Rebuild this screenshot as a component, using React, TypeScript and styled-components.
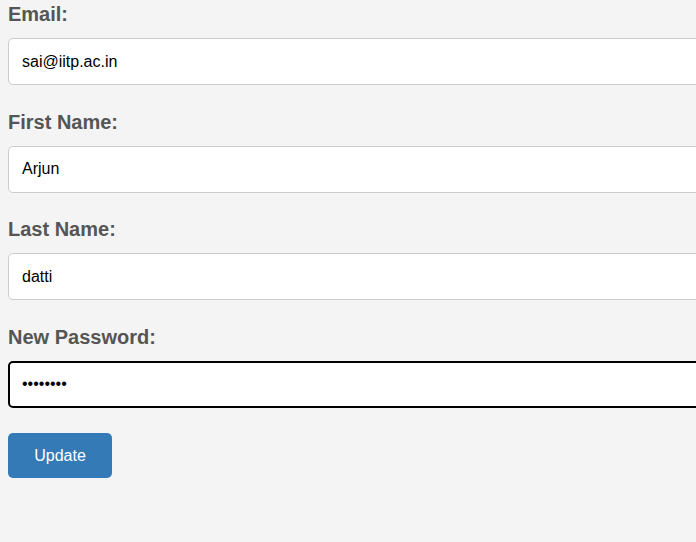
import React from "react";
import styled, { createGlobalStyle } from "styled-components";

const Global = createGlobalStyle`
  html, body { margin: 0; padding: 0; overflow: hidden; background: #f4f4f4; }
  body { font-family: "Liberation Sans", Arial, sans-serif; }
`;

const Form = styled.form`
  display: flex;
  flex-direction: column;
  padding: 2px 0 0 8px;
  width: 740px;
`;

const Field = styled.div`
  display: flex;
  flex-direction: column;
  margin-bottom: 24.67px;
`;

const Label = styled.label`
  font-size: 20px;
  font-weight: bold;
  line-height: 24px;
  color: #555555;
  margin-bottom: 12px;
`;

const Input = styled.input<{ $focused?: boolean }>`
  box-sizing: border-box;
  height: 47px;
  width: 100%;
  padding: 0 12px;
  font-family: "Liberation Sans", Arial, sans-serif;
  font-size: 16px;
  color: #000;
  background: #fff;
  border: ${(p) => (p.$focused ? "2px solid #000" : "1px solid #cccccc")};
  padding-left: ${(p) => (p.$focused ? "12px" : "13px")};
  border-radius: 5px;
  outline: none;
`;

const Button = styled.button`
  align-self: flex-start;
  box-sizing: border-box;
  width: 104px;
  height: 45px;
  margin-top: 0.5px;
  background: #337ab7;
  color: #fff;
  border: none;
  border-radius: 5px;
  font-family: "Liberation Sans", Arial, sans-serif;
  font-size: 16px;
  cursor: pointer;
`;

export default function App() {
  return (
    <>
      <Global />
      <Form onSubmit={(e) => e.preventDefault()}>
        <Field>
          <Label>Email:</Label>
          <Input type="email" defaultValue="sai@iitp.ac.in" />
        </Field>
        <Field>
          <Label>First Name:</Label>
          <Input type="text" defaultValue="Arjun" />
        </Field>
        <Field>
          <Label>Last Name:</Label>
          <Input type="text" defaultValue="datti" />
        </Field>
        <Field>
          <Label>New Password:</Label>
          <Input type="password" defaultValue="arjun123" $focused />
        </Field>
        <Button type="submit">Update</Button>
      </Form>
    </>
  );
}
